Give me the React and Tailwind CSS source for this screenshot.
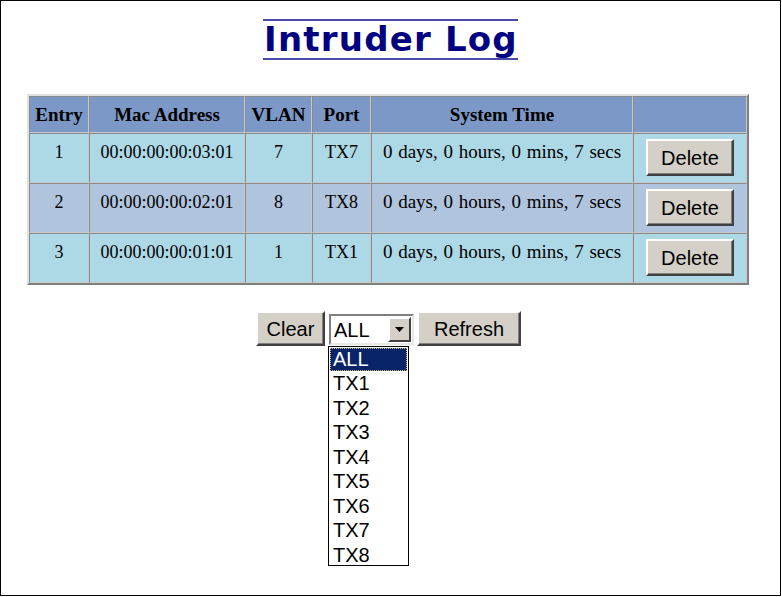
import React from "react";

const rows = [
  { entry: "1", mac: "00:00:00:00:03:01", vlan: "7", port: "TX7", bg: "bg-[#add8e6]" },
  { entry: "2", mac: "00:00:00:00:02:01", vlan: "8", port: "TX8", bg: "bg-[#b0c4de]" },
  { entry: "3", mac: "00:00:00:00:01:01", vlan: "1", port: "TX1", bg: "bg-[#add8e6]" },
];

const cell = "border border-t-[#8a8a8a] border-l-[#8a8a8a] border-r-[#c8c8c8] border-b-[#c8c8c8] text-center";
const btn =
  "bg-[#d4d0c8] border-2 border-t-white border-l-white border-r-[#404040] border-b-[#404040] text-[20px] leading-none text-black font-['Liberation_Sans',Arial,sans-serif] shadow-[inset_-1px_-1px_0_#808080]";

export default function App() {
  return (
    <div className="w-[781px] h-[596px] border border-black bg-white relative font-['Liberation_Serif','Times_New_Roman',serif] text-black">
      <div className="pt-[18px] text-center">
        <span className="inline-block border-t-2 border-b-2 border-[#4a4aa8] text-[34px] leading-[37px] font-bold text-[#000080] font-['DejaVu_Sans',Verdana,sans-serif] tracking-[1.2px] pl-[1px]">
          Intruder Log
        </span>
      </div>

      <table className="ml-[26px] mt-[34px] w-[722px] border-separate border-spacing-0 border-2 border-t-[#e0e0e0] border-l-[#e0e0e0] border-r-[#808080] border-b-[#808080] bg-[#c0c0c0] text-[18px]">
        <colgroup>
          <col className="w-[60px]" />
          <col className="w-[156px]" />
          <col className="w-[67px]" />
          <col className="w-[59px]" />
          <col className="w-[262px]" />
          <col className="w-[114px]" />
        </colgroup>
        <thead>
          <tr className="bg-[#7b98c6] h-[37px]">
            {["Entry", "Mac Address", "VLAN", "Port", "System Time", ""].map((h, i) => (
              <th key={i} className={`${cell} font-bold p-0 align-middle leading-[20px] text-[19px]`}>
                {h}
              </th>
            ))}
          </tr>
        </thead>
        <tbody>
          {rows.map((r) => (
            <tr key={r.entry} className={r.bg}>
              <td className={`${cell} align-top pt-[9px] leading-[18px]`}>{r.entry}</td>
              <td className={`${cell} align-top pt-[9px] leading-[18px]`}>{r.mac}</td>
              <td className={`${cell} align-top pt-[9px] leading-[18px]`}>{r.vlan}</td>
              <td className={`${cell} align-top pt-[9px] leading-[18px]`}>{r.port}</td>
              <td className={`${cell} align-top pt-[9px] leading-[18px] text-[19px] [word-spacing:1px]`}>
                0 days, 0 hours, 0 mins, 7 secs
              </td>
              <td className={`${cell} align-top pt-[5px] pb-[6px]`}>
                <button className={`${btn} w-[88px] h-[37px]`}>Delete</button>
              </td>
            </tr>
          ))}
        </tbody>
      </table>

      <div className="mt-[26px] flex justify-center items-start pr-[4px]">
        <button className={`${btn} w-[69px] h-[35px]`}>Clear</button>
        <div className="relative ml-[4px] mt-[3px]">
          <div className="w-[85px] h-[31px] bg-white border-2 border-t-[#808080] border-l-[#808080] border-r-[#e8e8e8] border-b-[#e8e8e8] flex items-center font-['Liberation_Sans',Arial,sans-serif] text-[20px]">
            <span className="pl-[3px] flex-1 leading-none">ALL</span>
            <span className="w-[23px] h-[25px] mr-[1px] bg-[#d4d0c8] border-2 border-t-white border-l-white border-r-[#404040] border-b-[#404040] flex items-center justify-center">
              <svg width="9" height="5" viewBox="0 0 9 5">
                <path d="M0 0h9L4.5 5z" fill="#000" />
              </svg>
            </span>
          </div>
          <div className="absolute left-[-1px] top-[32px] w-[81px] h-[220px] bg-white border border-black font-['Liberation_Sans',Arial,sans-serif] text-[20px] pt-[1px] z-10">
            <div className="mx-[1px] h-[23px] bg-[#0a246a] text-white leading-[23px] pl-[3px] outline-1 outline-dotted outline-[#d4c070] -outline-offset-1">
              ALL
            </div>
            {["TX1", "TX2", "TX3", "TX4", "TX5", "TX6", "TX7", "TX8"].map((t) => (
              <div key={t} className="leading-[24.5px] pl-[4px]">
                {t}
              </div>
            ))}
          </div>
        </div>
        <button className={`${btn} w-[104px] h-[35px] ml-[3px]`}>Refresh</button>
      </div>
    </div>
  );
}
